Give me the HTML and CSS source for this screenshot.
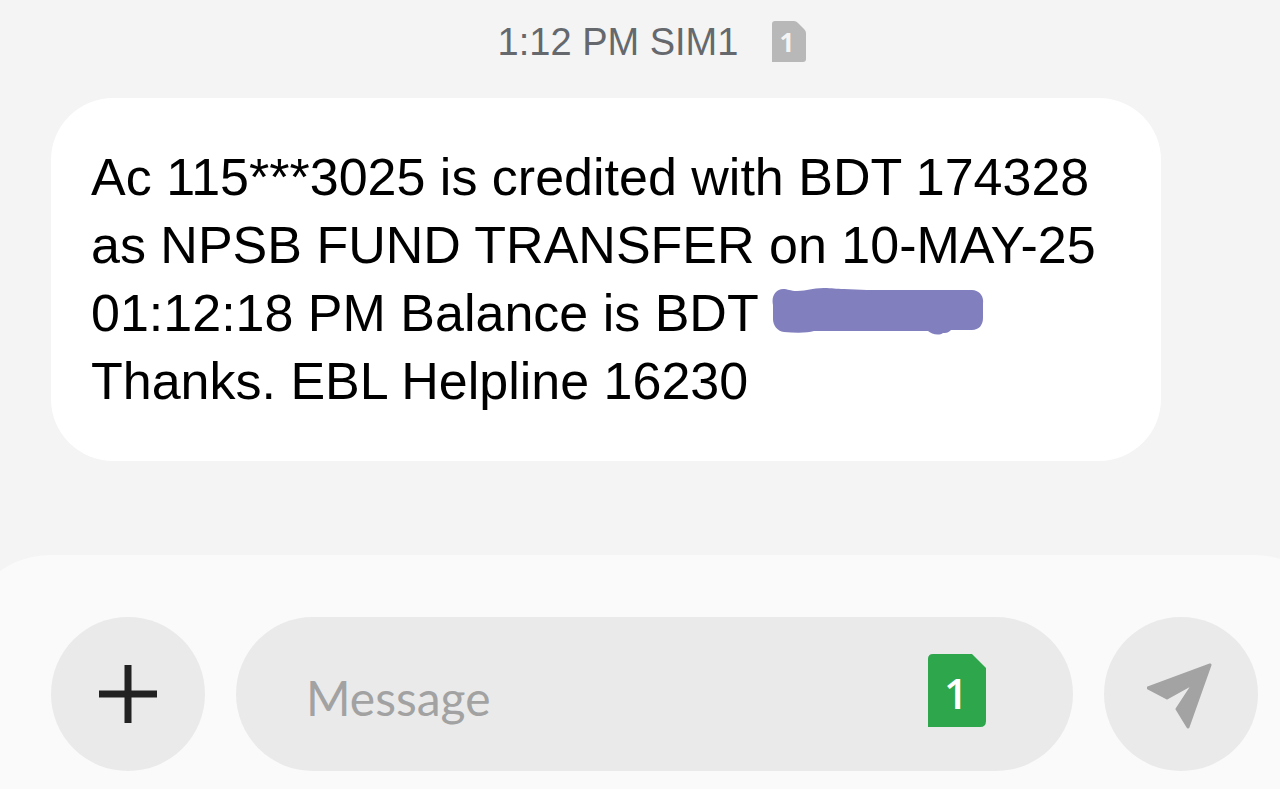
FILE: index.html
```html
<!DOCTYPE html>
<html lang="en">
<head>
<meta charset="utf-8">
<meta name="viewport" content="width=device-width, initial-scale=1">
<title>Messages</title>
<link rel="stylesheet" href="styles.css">
</head>
<body>
<main class="thread">
  <header class="stamp">
    <time datetime="13:12">1:12 PM SIM1</time>
    <svg class="stamp-sim" viewBox="0 0 34 42" role="img" aria-label="SIM 1">
      <path fill="#b8b8b8" d="M3 0H22Q24 0 26 2L32 8Q34 10 34 12V38Q34 41 31 41H0V3Q0 0 3 0Z"/>
      <text class="sim-digit sim-digit-small" x="15" y="31">1</text>
    </svg>
  </header>
  <article class="bubble">
    <p class="message">Ac 115***3025 is credited with BDT 174328<br>
      as NPSB FUND TRANSFER on 10-MAY-25<br>
      01:12:18 PM Balance is BDT
      <svg class="redaction" viewBox="0 0 212 47" role="img" aria-label="Hidden amount">
        <path fill="#827fbf" d="M1 17C-1 8 4 1 11 1C16 1 18 3 25 3C36 3 39 0 52 0C60 0 64 1 72 1L95 2H200C207 2 212 8 211 15V30C211 37 207 42 200 42H179C176 45 174 45 171 45C167 48 159 46 156 43H42C36 45 24 45 12 44C5 43 1 37 1 31Z"/>
      </svg><br>
      Thanks. EBL Helpline 16230</p>
  </article>
</main>
<footer class="dock">
  <form class="composer">
    <button class="round" type="button" aria-label="Add attachment">
      <svg class="plus" viewBox="0 0 60 60" aria-hidden="true">
        <path fill="none" stroke="#222" stroke-width="7" d="M30 1V59M1 30H59"/>
      </svg>
    </button>
    <div class="field">
      <input class="field-input" type="text" placeholder="Message" aria-label="Message">
      <button class="sim" type="button" aria-label="Choose SIM, SIM 1">
        <svg class="sim-card" viewBox="0 0 58 73" aria-hidden="true">
          <path fill="#2da64c" d="M5 0H44L58 14V67Q58 73 52 73H0V5Q0 0 5 0Z"/>
          <text class="sim-digit sim-digit-large" x="28" y="55">1</text>
        </svg>
      </button>
    </div>
    <button class="round" type="button" aria-label="Send">
      <svg class="plane" viewBox="0 0 68 72" aria-hidden="true">
        <path fill="#a3a3a3" stroke="#a3a3a3" stroke-width="3" stroke-linejoin="round" d="M63 7L1 30L20 40L47 25L30 51L41 69Z"/>
      </svg>
    </button>
  </form>
</footer>
</body>
</html>
```
FILE: styles.css
```css
* {
  box-sizing: border-box;
}

body {
  margin: 0;
  min-height: 100vh;
  display: flex;
  flex-direction: column;
  justify-content: space-between;
  overflow-x: hidden;
  background: #f4f4f4;
  font-family: "Liberation Sans", Arial, sans-serif;
}

.thread {
  padding: 20px 119px 40px 51px;
}

.stamp {
  display: flex;
  justify-content: center;
  align-items: center;
  gap: 34px;
  padding-left: 92px;
  font-size: 38px;
  line-height: 44px;
  color: #65686d;
}

.stamp-sim {
  width: 34px;
  height: 42px;
}

.sim-digit {
  font-family: "Open Sans", "Noto Sans", sans-serif;
  font-weight: 700;
  text-anchor: middle;
  fill: #fff;
}

.sim-digit-small {
  font-size: 26px;
  fill: #f4f4f4;
}

.sim-digit-large {
  font-size: 42px;
  font-weight: 600;
}

.bubble {
  margin-top: 34px;
  padding: 45px 40px 46px;
  border-radius: 62px;
  background: #fff;
}

.message {
  margin: 0;
  font-size: 52px;
  line-height: 68px;
  color: #000;
}

.redaction {
  width: 212px;
  height: 47px;
  vertical-align: -4px;
}

.dock {
  margin: 0 -61px 0 -36px;
  padding: 62px 83px 18px 87px;
  border-radius: 86px 86px 0 0;
  background: #fafafa;
}

.composer {
  display: flex;
  gap: 31px;
}

.round {
  flex: none;
  display: grid;
  place-items: center;
  width: 154px;
  height: 154px;
  padding: 0;
  border: 0;
  border-radius: 50%;
  background: #eaeaea;
}

.plus {
  width: 60px;
  height: 60px;
}

.plane {
  width: 68px;
  height: 72px;
}

.field {
  flex: 1;
  min-width: 0;
  display: flex;
  align-items: center;
  padding: 0 87px 7px 70px;
  border-radius: 77px;
  background: #eaeaea;
}

.field-input {
  flex: 1;
  min-width: 0;
  padding: 14px 0 0;
  border: 0;
  outline: 0;
  background: none;
  font-family: Lato, "Open Sans", sans-serif;
  font-size: 48px;
  line-height: 60px;
  color: #222;
}

.field-input::placeholder {
  color: #a2a2a2;
  opacity: 1;
}

.sim {
  display: flex;
  padding: 0;
  border: 0;
  background: none;
}

.sim-card {
  width: 58px;
  height: 73px;
}
```
